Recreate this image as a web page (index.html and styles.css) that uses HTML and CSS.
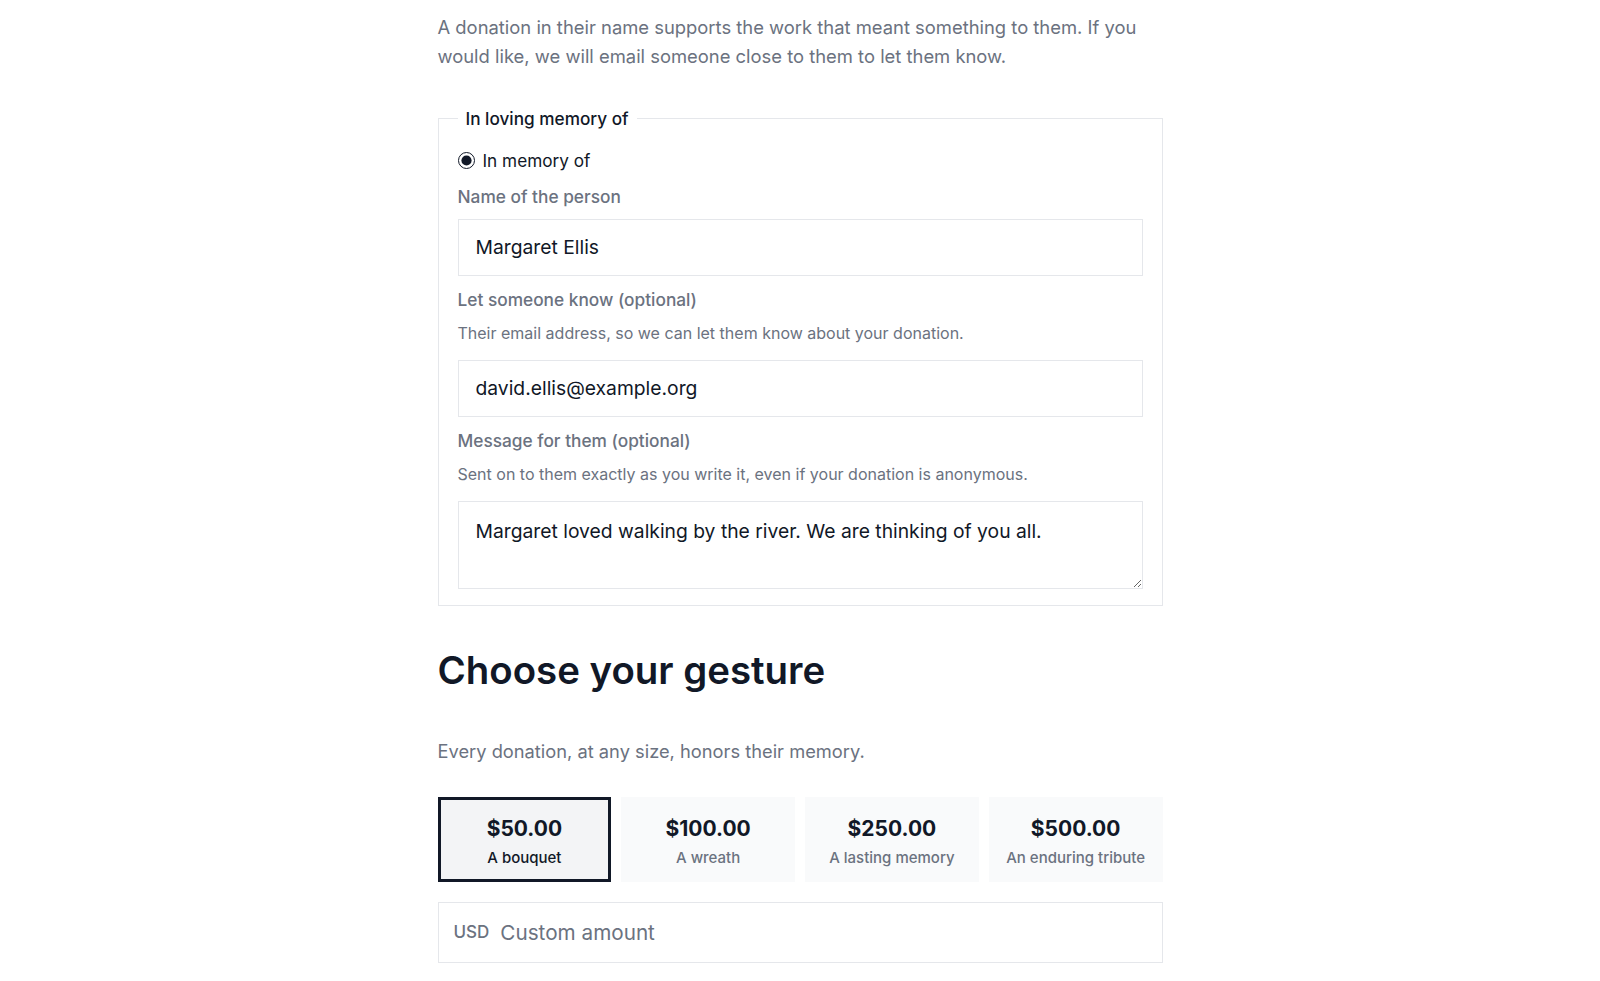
FILE: index.html
```html
<!DOCTYPE html>
<html lang="en">
<head>
<meta charset="utf-8">
<title>In loving memory</title>
<link rel="stylesheet" href="styles.css">
</head>
<body>
<main class="page">
  <p class="intro">A donation in their name supports the work that meant something to them. If you would like, we will email someone close to them to let them know.</p>

  <fieldset class="memory">
    <legend class="memory-legend">In loving memory of</legend>
    <label class="radio-row">
      <input type="radio" name="tribute" class="radio" checked>
      <span>In memory of</span>
    </label>

    <div class="field">
      <label class="field-label" for="name">Name of the person</label>
      <input id="name" class="text-input" type="text" value="Margaret Ellis">
    </div>

    <div class="field">
      <label class="field-label" for="email">Let someone know (optional)</label>
      <p class="field-help">Their email address, so we can let them know about your donation.</p>
      <input id="email" class="text-input" type="email" value="david.ellis@example.org">
    </div>

    <div class="field">
      <label class="field-label" for="msg">Message for them (optional)</label>
      <p class="field-help">Sent on to them exactly as you write it, even if your donation is anonymous.</p>
      <textarea id="msg" class="text-area">Margaret loved walking by the river. We are thinking of you all.</textarea>
    </div>
  </fieldset>

  <h2 class="section-title">Choose your gesture</h2>
  <p class="section-sub">Every donation, at any size, honors their memory.</p>

  <div class="amounts">
    <button class="amount amount-selected" type="button">
      <span class="amount-value">$50.00</span>
      <span class="amount-label">A bouquet</span>
    </button>
    <button class="amount" type="button">
      <span class="amount-value">$100.00</span>
      <span class="amount-label">A wreath</span>
    </button>
    <button class="amount" type="button">
      <span class="amount-value">$250.00</span>
      <span class="amount-label">A lasting memory</span>
    </button>
    <button class="amount" type="button">
      <span class="amount-value">$500.00</span>
      <span class="amount-label">An enduring tribute</span>
    </button>
  </div>

  <label class="custom">
    <span class="custom-currency">USD</span>
    <input class="custom-input" type="text" placeholder="Custom amount">
  </label>
</main>
</body>
</html>
```

FILE: styles.css
```css
* { box-sizing: border-box; }

html, body {
  margin: 0;
  padding: 0;
  background: #ffffff;
}

body {
  font-family: Inter, "Noto Sans", "Liberation Sans", sans-serif;
  color: #111827;
}

.page {
  width: 725px;
  margin: 0 auto;
  padding-top: 13px;
  padding-bottom: 40px;
}

.intro {
  margin: 0;
  font-size: 18.4px;
  line-height: 28.8px;
  color: #6b7280;
}

.memory {
  margin: 36px 0 0;
  padding: 18px 19px 16px;
  border: 1px solid #e5e7eb;
  min-width: 0;
}

.memory-legend {
  padding: 0 8px;
  margin-left: 0;
  font-size: 17.2px;
  line-height: 24px;
  font-weight: 500;
  color: #111827;
}

.radio-row {
  display: flex;
  align-items: center;
  gap: 8px;
  height: 24px;
  font-size: 17.2px;
  color: #111827;
}

.radio {
  margin: 0;
  width: 17px;
  height: 17px;
  accent-color: #111827;
}

.field {
  margin-top: 12px;
  display: flex;
  flex-direction: column;
}

.field-label {
  font-size: 17.3px;
  line-height: 24px;
  font-weight: 500;
  color: #6b7280;
}

.field-help {
  margin: 10px 0 0;
  font-size: 16px;
  line-height: 22px;
  color: #6b7280;
}

.text-input,
.text-area {
  margin-top: 10px;
  width: 100%;
  border: 1px solid #e5e7eb;
  border-radius: 0;
  padding: 0 17px;
  font-family: inherit;
  font-size: 19.3px;
  color: #111827;
  background: #ffffff;
  outline: none;
}

.field-help + .text-input,
.field-help + .text-area {
  margin-top: 16px;
}

.text-input {
  height: 57px;
}

.text-area {
  height: 88px;
  padding-top: 15px;
  line-height: 28px;
  resize: vertical;
  display: block;
}

.section-title {
  margin: 42px 0 0;
  font-size: 38.4px;
  line-height: 45.6px;
  font-weight: 600;
  color: #111827;
}

.section-sub {
  margin: 44px 0 0;
  font-size: 18.3px;
  line-height: 28.8px;
  color: #6b7280;
}

.amounts {
  margin-top: 31px;
  display: grid;
  grid-template-columns: repeat(4, 1fr);
  gap: 10px;
}

.amount {
  height: 85px;
  border: 3px solid transparent;
  border-radius: 0;
  background: #f9fafb;
  font-family: inherit;
  display: flex;
  flex-direction: column;
  align-items: center;
  justify-content: center;
  gap: 5px;
  padding: 4px 0 0;
  cursor: pointer;
}

.amount-selected {
  border-color: #111827;
  background: #f3f4f6;
}

.amount-value {
  font-size: 21px;
  line-height: 28px;
  font-weight: 700;
  color: #111827;
}

.amount-label {
  font-size: 15px;
  line-height: 20px;
  font-weight: 500;
  color: #6b7280;
}

.amount-selected .amount-label {
  color: #111827;
}

.custom {
  margin-top: 20px;
  height: 61px;
  display: flex;
  align-items: center;
  gap: 11px;
  padding: 0 15px;
  border: 1px solid #e5e7eb;
}

.custom-currency {
  font-size: 17px;
  font-weight: 500;
  color: #6b7280;
}

.custom-input {
  flex: 1;
  border: 0;
  outline: none;
  padding: 0;
  font-family: inherit;
  font-size: 20.7px;
  color: #111827;
  background: transparent;
}

.custom-input::placeholder {
  color: #6b7280;
}
```
